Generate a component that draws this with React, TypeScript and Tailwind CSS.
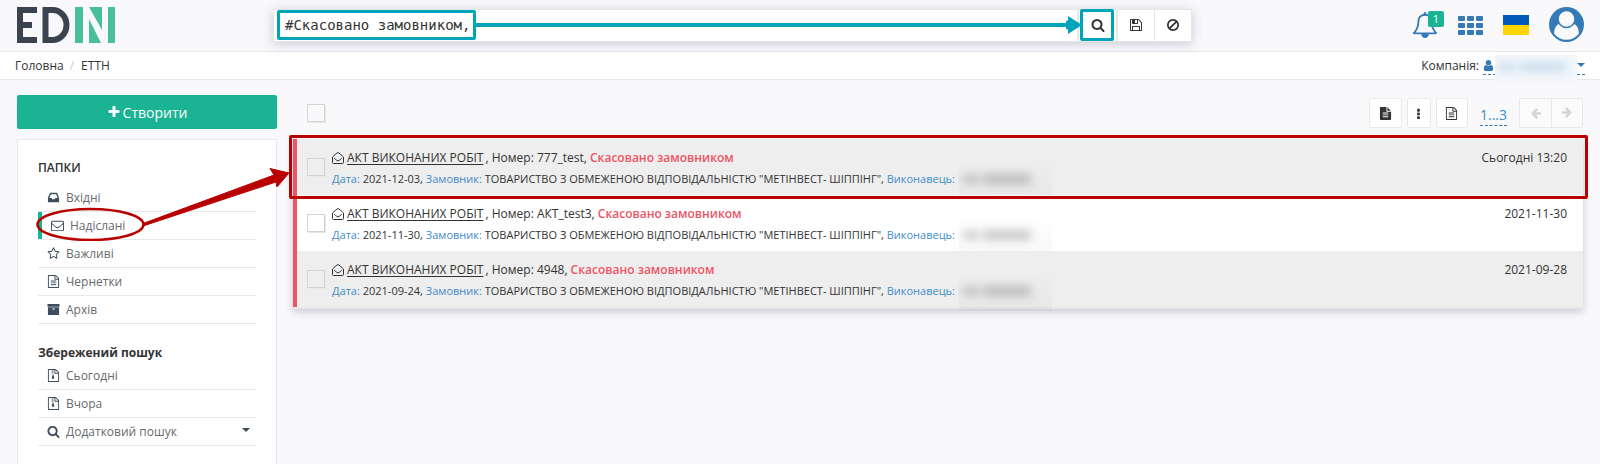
import React, { useState } from "react";

const paths = {
  search:
    "M1216 832q0-185-131.5-316.5t-316.5-131.5-316.5 131.5-131.5 316.5 131.5 316.5 316.5 131.5 316.5-131.5 131.5-316.5zm512 832q0 52-38 90t-90 38q-54 0-90-38l-343-342q-179 124-399 124-143 0-273.5-55.5t-225-150-150-225-55.5-273.5 55.5-273.5 150-225 225-150 273.5-55.5 273.5 55.5 225 150 150 225 55.5 273.5q0 220-124 399l343 343q37 37 37 90z",
  plus: "M1600 736v192q0 40-28 68t-68 28h-416v416q0 40-28 68t-68 28h-192q-40 0-68-28t-28-68v-416h-416q-40 0-68-28t-28-68v-192q0-40 28-68t68-28h416v-416q0-40 28-68t68-28h192q40 0 68 28t28 68v416h416q40 0 68 28t28 68z",
  save: "M512 1536h768v-384h-768v384zm896 0h128v-896q0-14-10-38.5t-20-34.5l-281-281q-10-10-34-20t-39-10v416q0 40-28 68t-68 28h-576q-40 0-68-28t-28-68v-416h-128v1280h128v-416q0-40 28-68t68-28h832q40 0 68 28t28 68v416zm-384-928v-320q0-13-9.5-22.5t-22.5-9.5h-192q-13 0-22.5 9.5t-9.5 22.5v320q0 13 9.5 22.5t22.5 9.5h192q13 0 22.5-9.5t9.5-22.5zm640 32v928q0 40-28 68t-68 28h-1344q-40 0-68-28t-28-68v-1344q0-40 28-68t68-28h928q40 0 88 20t76 48l280 280q28 28 48 76t20 88z",
  ban: "M1440 893q0-161-87-295l-754 753q137 89 297 89 111 0 211.5-43.5t173.5-116.5 116-174.5 43-212.5zm-999 299l755-754q-135-91-300-91-148 0-273 73t-198 199-73 274q0 162 89 299zm1223-299q0 157-61 300t-163.5 246-245 164-298.5 61-298.5-61-245-164-163.5-246-61-300 61-299.5 163.5-245.5 245-164 298.5-61 298.5 61 245 164 163.5 245.5 61 299.5z",
  bell: "M246 1408h1300q-266-300-266-832 0-51-24-105t-69-103-121.5-80.5-169.5-31.5-169.5 31.5-121.5 80.5-69 103-24 105q0 532-266 832zm1482 0q0 52-38 90t-90 38h-448q0 106-75 181t-181 75-181-75-75-181h-448q-52 0-90-38t-38-90q50-42 91-88t85-119.5 74.5-158.5 50-206 19.5-260q0-152 117-282.5t307-158.5q-8-19-8-39 0-40 28-68t68-28 68 28 28 68q0 20-8 39 190 28 307 158.5t117 282.5q0 139 19.5 260t50 206 74.5 158.5 85 119.5 91 88z",
  star: "M1201 1004l306-297-422-62-189-382-189 382-422 62 306 297-73 421 378-199 377 199zm527-357q0 22-26 48l-363 354 86 500q1 7 1 20 0 50-41 50-19 0-40-12l-449-236-449 236q-22 12-40 12-21 0-31.5-14.5t-10.5-35.5q0-6 2-20l86-500-364-354q-25-27-25-48 0-37 56-46l502-73 225-455q19-41 49-41t49 41l225 455 502 73q56 9 56 46z",
  envelope:
    "M1664 1504v-768q-32 36-69 66-268 206-426 338-51 43-83 67t-86.5 48.5-102.5 24.5h-2q-48 0-102.5-24.5t-86.5-48.5-83-67q-158-132-426-338-37-30-69-66v768q0 13 9.5 22.5t22.5 9.5h1472q13 0 22.5-9.5t9.5-22.5zm0-1051v-24.5l-.5-13-3-12.5-5.5-9-9-7.5-14-2.5h-1472q-13 0-22.5 9.5t-9.5 22.5q0 168 147 284 193 152 401 317 6 5 35 29.5t46 37.5 44.5 31.5 50.5 27.5 43 9h2q20 0 43-9t50.5-27.5 44.5-31.5 46-37.5 35-29.5q208-165 401-317 54-43 100.5-115.5t46.5-131.5zm128-37v1088q0 66-47 113t-113 47h-1472q-66 0-113-47t-47-113v-1088q0-66 47-113t113-47h1472q66 0 113 47t47 113z",
  inbox:
    "M1151 960h316q-1-3-2.5-8.5t-2.5-7.5l-212-496h-708l-212 496q-1 3-2.5 8.5t-2.5 7.5h316l95 192h320zm513 30v482q0 26-19 45t-45 19h-1408q-26 0-45-19t-19-45v-482q0-62 25-123l238-552q10-25 36.5-42t52.5-17h832q26 0 52.5 17t36.5 42l238 552q25 61 25 123z",
  fileTextO:
    "M1596 380q28 28 48 76t20 88v1152q0 40-28 68t-68 28h-1344q-40 0-68-28t-28-68v-1600q0-40 28-68t68-28h896q40 0 88 20t76 48zm-444-244v376h376q-10-29-22-41l-313-313q-12-12-41-22zm384 1528v-1024h-416q-40 0-68-28t-28-68v-416h-768v1536h1280zm-1024-864q0-14 9-23t23-9h704q14 0 23 9t9 23v64q0 14-9 23t-23 9h-704q-14 0-23-9t-9-23v-64zm736 224q14 0 23 9t9 23v64q0 14-9 23t-23 9h-704q-14 0-23-9t-9-23v-64q0-14 9-23t23-9h704zm0 256q14 0 23 9t9 23v64q0 14-9 23t-23 9h-704q-14 0-23-9t-9-23v-64q0-14 9-23t23-9h704z",
  fileArchive:
    "M1596 380q28 28 48 76t20 88v1152q0 40-28 68t-68 28h-1344q-40 0-68-28t-28-68v-1600q0-40 28-68t68-28h896q40 0 88 20t76 48zm-444-244v376h376q-10-29-22-41l-313-313q-12-12-41-22zm384 1528v-1024h-416q-40 0-68-28t-28-68v-416h-128v128h-128v-128h-512v1536h1280zm-896-1408h128v128h-128zm128 128h128v128h-128zm-128 128h128v128h-128zm128 128h128v128h-128zm0 192h128l107 349q21 76-40 137t-131 61-131-61-40-137z",
  fileText:
    "M1596 476q14 14 28 36h-472v-472q22 14 36 28zm-476 164h544v1056q0 40-28 68t-68 28h-1344q-40 0-68-28t-28-68v-1600q0-40 28-68t68-28h800v544q0 40 28 68t68 28zm160 736v-64q0-14-9-23t-23-9h-704q-14 0-23 9t-9 23v64q0 14 9 23t23 9h704q14 0 23-9t9-23zm0-256v-64q0-14-9-23t-23-9h-704q-14 0-23 9t-9 23v64q0 14 9 23t23 9h704q14 0 23-9t9-23zm0-256v-64q0-14-9-23t-23-9h-704q-14 0-23 9t-9 23v64q0 14 9 23t23 9h704q14 0 23-9t9-23z",
  archive:
    "M1088 832q0-26-19-45t-45-19h-256q-26 0-45 19t-19 45 19 45 45 19h256q26 0 45-19t19-45zm576-192v960q0 26-19 45t-45 19h-1408q-26 0-45-19t-19-45v-960q0-26 19-45t45-19h1408q26 0 45 19t19 45zm64-448v256q0 26-19 45t-45 19h-1536q-26 0-45-19t-19-45v-256q0-26 19-45t45-19h1536q26 0 45 19t19 45z",
  arrowLeft:
    "M1664 896v128q0 53-32.5 90.5t-84.5 37.500h-704l293 294q38 36 38 90t-38 90l-75 76q-37 37-90 37-52 0-91-37l-651-652q-37-37-37-90 0-52 37-91l651-650q38-38 91-38 52 0 90 38l75 74q38 38 38 91t-38 91l-293 293h704q52 0 84.500 37.500t32.500 90.500z",
  user: "M1536 1399q0 109-62.5 187t-150.5 78h-854q-88 0-150.5-78t-62.5-187q0-85 8.5-160.5t31.5-152 58.5-131 94-89 134.5-34.5q131 128 313 128t313-128q76 0 134.5 34.5t94 89 58.5 131 31.5 152 8.5 160.5zm-256-887q0 159-112.5 271.5t-271.5 112.5-271.5-112.5-112.5-271.5 112.5-271.5 271.5-112.5 271.5 112.5 112.5 271.5z",
  ellipsis:
    "M800 256h192q96 0 96 96v192q0 96-96 96h-192q-96 0-96-96v-192q0-96 96-96zm0 512h192q96 0 96 96v192q0 96-96 96h-192q-96 0-96-96v-192q0-96 96-96zm0 512h192q96 0 96 96v192q0 96-96 96h-192q-96 0-96-96v-192q0-96 96-96z",
};

type IconName = keyof typeof paths;

function Icon({ name, className = "size-[14px]" }: { name: IconName; className?: string }) {
  return (
    <svg viewBox="0 0 1792 1792" fill="currentColor" aria-hidden="true" className={`shrink-0 ${className}`}>
      <path d={paths[name]} />
    </svg>
  );
}

function OpenEnvelope() {
  return (
    <svg viewBox="0 0 12 12" fill="none" stroke="currentColor" aria-hidden="true" className="size-3 shrink-0">
      <path d="M.5 5v5.500q0 1 1 1h9q1 0 1-1V5Q9 2.500 7 1 6 .2 5 1 3 2.500 .5 5z" />
      <path d="M2.200 6.200Q4 7.800 5 8.500q1 .7 2 0 1-.7 2.800-2.300" />
    </svg>
  );
}

function Caret({ className = "" }: { className?: string }) {
  return (
    <svg viewBox="0 0 8 4" fill="currentColor" aria-hidden="true" className={`h-1 w-2 shrink-0 ${className}`}>
      <path d="M0 0h8L4 4z" />
    </svg>
  );
}

function Logo() {
  return (
    <svg viewBox="0 0 98 36" role="img" aria-label="EDIN" className="h-9 w-[98px]">
      <g fill="none" stroke="#3a434f" strokeWidth="6">
        <path d="M20 3H3v30h17M3 18h12" />
        <path d="M28.500 3h7a14 15 0 0 1 0 30h-7z" />
      </g>
      <g fill="#47bf98">
        <path d="M58 0h8v36h-8zM91 0h7v36h-7zM72 0h13v23zM72 12l12 24H72z" />
      </g>
    </svg>
  );
}

function Header() {
  const [query, setQuery] = useState("#Скасовано замовником,");
  return (
    <header className="flex h-[52px] items-center border-b border-[#e7e8ec] px-4 pb-px">
      <a href="#" className="ml-px w-64 shrink-0">
        <Logo />
      </a>
      <form
        onSubmit={(e) => e.preventDefault()}
        className="relative flex h-[33px] flex-1 border border-[#e5e6e7] bg-white shadow-[0_2px_10px_rgba(60,60,110,0.25)]"
      >
        <input
          aria-label="Пошук"
          value={query}
          onChange={(e) => setQuery(e.target.value)}
          className="min-w-0 flex-1 bg-transparent pl-[11px] font-['DejaVu_Sans_Mono',monospace] text-[14px] text-[#333] outline-none"
        />
        <button aria-label="Шукати" className="relative flex w-[39px] items-center justify-center border-l-2 border-[#e7e8ea] text-[#333]">
          <Icon name="search" />
          <span className="pointer-events-none absolute -top-px left-px h-8 w-[34px] rounded-[2px] border-3 border-[#00a4ba]" />
        </button>
        <button aria-label="Зберегти" className="flex w-[38px] items-center justify-center border-l-2 border-[#e7e8ea] text-[#333]">
          <Icon name="save" />
        </button>
        <button aria-label="Очистити" className="flex w-[37px] items-center justify-center border-l border-[#e7e8ea] text-[#333]">
          <Icon name="ban" />
        </button>
        <span className="pointer-events-none absolute top-0 left-[3px] h-[30px] w-[199px] rounded-[2px] border-3 border-[#00a4ba]" />
        <span className="pointer-events-none absolute top-[5px] right-[109px] left-[201px] flex items-center">
          <span className="h-1 flex-1 bg-[#00a4ba]" />
          <svg viewBox="0 0 16 20" aria-hidden="true" className="h-5 w-4">
            <path d="M0 14V6l2-.5V1l14 9-14 9v-4.500z" fill="#00a4ba" />
          </svg>
        </span>
      </form>
      <div className="flex w-[392px] shrink-0 items-center justify-end text-[#337ab7]">
        <button aria-label="Сповіщення" className="relative mr-5">
          <Icon name="bell" className="size-[26px]" />
          <span className="absolute -top-px left-4 flex size-4 items-center justify-center rounded-[2px] bg-[#1ab394] text-[11px] text-white">
            1
          </span>
        </button>
        <button aria-label="Меню" className="mr-5 grid grid-cols-3 gap-[2px]">
          {Array.from({ length: 9 }, (_, i) => (
            <span key={i} className="h-[5px] w-[7px] rounded-[1px] bg-[#337ab7]" />
          ))}
        </button>
        <button aria-label="Мова: українська" className="mr-5 flex w-[26px] flex-col">
          <span className="h-[10px] bg-[#005bbb]" />
          <span className="h-[10px] bg-[#ffd500]" />
        </button>
        <button aria-label="Профіль" className="mb-[2px]">
          <svg viewBox="0 0 35 35" aria-hidden="true" className="size-[35px]">
            <circle cx="17.500" cy="17.500" r="17.500" fill="#337ab7" />
            <path d="M5 26.500C5.500 20.500 7.500 17.500 10.500 17q7 6 14 0c3 .5 5 3.500 5.500 9.500a15.500 15.500 0 0 1-25 0z" fill="#f9f9fb" />
            <circle cx="17.500" cy="12" r="8.500" fill="#f9f9fb" stroke="#337ab7" strokeWidth="1.500" />
          </svg>
        </button>
      </div>
    </header>
  );
}

function Breadcrumb() {
  return (
    <div className="flex h-7 items-center justify-between border-b border-[#e7e8ec] bg-white px-[15px] text-[12px]">
      <nav className="flex gap-[6px]">
        <a href="#">Головна</a>
        <span className="text-[#ccc]">/</span>
        <a href="#" className="ml-px">
          ЕТТН
        </a>
      </nav>
      <div className="flex items-center">
        Компанія:
        <button
          aria-label="Компанія"
          className="relative ml-1 flex h-[19px] w-[102px] items-center justify-between border-b border-dashed border-[#337ab7] text-[#337ab7]"
        >
          <Icon name="user" className="-ml-px size-[13px]" />
          <Caret />
          <span className="absolute -top-px left-3 h-7 w-[82px] overflow-hidden bg-[#f3f7fb]">
            <span className="absolute top-2 left-1 h-2 w-4 bg-[#c5d9ea] blur-[5px]" />
            <span className="absolute top-2 left-6 h-2 w-12 bg-[#c5d9ea] blur-[5px]" />
          </span>
        </button>
      </div>
    </div>
  );
}

function FolderItem({ icon, label, active, caret }: { icon: IconName; label: string; active?: boolean; caret?: boolean }) {
  return (
    <li className="relative border-b border-[#e7eaec]">
      <a
        href="#"
        className={`flex h-[27px] items-center pl-[9px] text-[#676a6c] ${active ? "border-l-4 border-[#1ab394]" : ""}`}
      >
        <Icon name={icon} className="mr-[6px] size-[13px] text-[#3d4d5d]" />
        {label}
        {caret && <Caret className="mr-[6px] mb-1 ml-auto text-[#3d4d5d]" />}
      </a>
      {active && (
        <svg viewBox="0 0 260 80" fill="none" aria-hidden="true" className="pointer-events-none absolute -top-[51px] -left-[4px] z-10 h-20 w-[260px]">
          <ellipse cx="56.500" cy="63.500" rx="53" ry="15.500" stroke="#b80000" strokeWidth="2.500" />
          <path d="M109 62.500L240 14l-4-6.500 19 4.500-12 14-1-5L109 65z" fill="#b80000" stroke="#b80000" strokeWidth="1" />
        </svg>
      )}
    </li>
  );
}

function Sidebar() {
  return (
    <aside className="flex w-[260px] shrink-0 flex-col text-[12px]">
      <button className="flex h-[34px] shrink-0 items-center justify-center gap-[2px] rounded-[2px] bg-[#1ab394] text-[14px] text-white">
        <Icon name="plus" className="size-[14px]" />
        Створити
      </button>
      <div className="mt-[10px] flex-1 border border-b-0 border-[#e7eaf4] bg-white px-5 pt-[18px]">
        <h2 className="mb-[6px] leading-5 font-semibold">ПАПКИ</h2>
        <ul>
          <FolderItem icon="inbox" label="Вхідні" />
          <FolderItem icon="envelope" label="Надіслані" active />
          <FolderItem icon="star" label="Важливі" />
          <FolderItem icon="fileTextO" label="Чернетки" />
          <FolderItem icon="archive" label="Архів" />
        </ul>
        <h2 className="pt-[19px] leading-[19px] font-bold">Збережений пошук</h2>
        <ul>
          <FolderItem icon="fileArchive" label="Сьогодні" />
          <FolderItem icon="fileArchive" label="Вчора" />
          <FolderItem icon="search" label="Додатковий пошук" caret />
        </ul>
      </div>
    </aside>
  );
}

function Checkbox({ label, className = "" }: { label: string; className?: string }) {
  return (
    <input
      type="checkbox"
      aria-label={label}
      className={`size-[18px] shrink-0 appearance-none border border-[#d5d3d0] shadow-[1px_1px_0_#e9e7e4] ${className}`}
    />
  );
}

const docs = [
  { number: "777_test", date: "2021-12-03", time: "Сьогодні 13:20", marked: true },
  { number: "АКТ_test3", date: "2021-11-30", time: "2021-11-30" },
  { number: "4948", date: "2021-09-24", time: "2021-09-28" },
];

function DocRow({ doc }: { doc: (typeof docs)[number] }) {
  return (
    <li className="relative flex h-14 border-l-4 border-[#ef5466] pr-4 pl-[10px] odd:bg-[#eeeeee]">
      <Checkbox label={`Вибрати ${doc.number}`} className="mt-[19px] mr-[7px]" />
      <div className="min-w-0 flex-1 pt-[9px]">
        <div className="flex h-5 items-center text-[12px] whitespace-pre">
          <OpenEnvelope />
          <a href="#" className="ml-[3px] underline underline-offset-2">
            АКТ ВИКОНАНИХ РОБІТ
          </a>
          <span className="ml-[2px]">, Номер: {doc.number}, </span>
          <span className="font-semibold text-[#ed5565]">Скасовано замовником</span>
        </div>
        <div className="mt-px flex h-5 items-center text-[11px] whitespace-pre">
          <span className="text-[#428bca]">Дата:</span>
          <span> {doc.date}, </span>
          <span className="text-[#428bca]">Замовник:</span>
          <span> ТОВАРИСТВО З ОБМЕЖЕНОЮ ВІДПОВІДАЛЬНІСТЮ "МЕТІНВЕСТ- ШІППІНГ", </span>
          <span className="text-[#428bca]">Виконавець:</span>
          <span className="ml-1 flex h-10 w-[93px] items-center bg-linear-to-b from-black/0 to-black/3 pl-1">
            <span className="h-2 w-4 bg-black/20 blur-[5px]" />
            <span className="ml-1 h-[10px] w-12 bg-black/20 blur-[5px]" />
          </span>
        </div>
      </div>
      <time className="pt-[9px] text-[12px] leading-5">{doc.time}</time>
      {doc.marked && (
        <span className="pointer-events-none absolute -inset-x-[5px] -top-1 -bottom-1 -left-2 z-10 rounded-[2px] border-3 border-[#b80000]" />
      )}
    </li>
  );
}

function Toolbar() {
  const button = "flex h-[30px] items-center justify-center rounded-[2px] border border-[#e7eaec] bg-white";
  return (
    <div className="flex h-[30px] items-center">
      <Checkbox label="Вибрати всі" className="ml-[14px]" />
      <div className="ml-auto flex items-center">
        <button aria-label="Документ" className={`mr-[5px] w-[33px] ${button}`}>
          <Icon name="fileText" className="size-[13px]" />
        </button>
        <button aria-label="Ще" className={`mr-[5px] w-6 ${button}`}>
          <Icon name="ellipsis" className="size-[13px]" />
        </button>
        <button aria-label="Звіт" className={`mr-3 w-8 ${button}`}>
          <Icon name="fileTextO" className="size-[13px]" />
        </button>
        <button className="mt-1 mr-3 border-b border-dashed border-[#337ab7] text-[14px] leading-5 text-[#428bca]">1...3</button>
        <button
          aria-label="Назад"
          disabled
          className="flex h-[30px] w-[33px] items-center justify-center rounded-l-[2px] border border-[#e7eaec] bg-[#fbfbfc] text-[#d5d5d5]"
        >
          <Icon name="arrowLeft" className="size-3" />
        </button>
        <button
          aria-label="Вперед"
          disabled
          className="-ml-px flex h-[30px] w-8 items-center justify-center rounded-r-[2px] border border-[#e7eaec] bg-[#fbfbfc] text-[#d5d5d5]"
        >
          <Icon name="arrowLeft" className="size-3 rotate-180" />
        </button>
      </div>
    </div>
  );
}

export default function App() {
  return (
    <div className="flex min-h-screen flex-col bg-[#f9f9fb] font-['Open_Sans','Noto_Sans',sans-serif] text-[#333]">
      <Header />
      <Breadcrumb />
      <div className="flex flex-1 gap-4 px-[17px] pt-[15px]">
        <Sidebar />
        <main className="min-w-0 flex-1 pt-[3px]">
          <Toolbar />
          <ul className="mt-[11px] border-b-2 border-[#e6e7eb] bg-white shadow-[0_3px_8px_rgba(60,60,110,0.25)]">
            {docs.map((doc) => (
              <DocRow key={doc.number} doc={doc} />
            ))}
          </ul>
        </main>
      </div>
    </div>
  );
}
